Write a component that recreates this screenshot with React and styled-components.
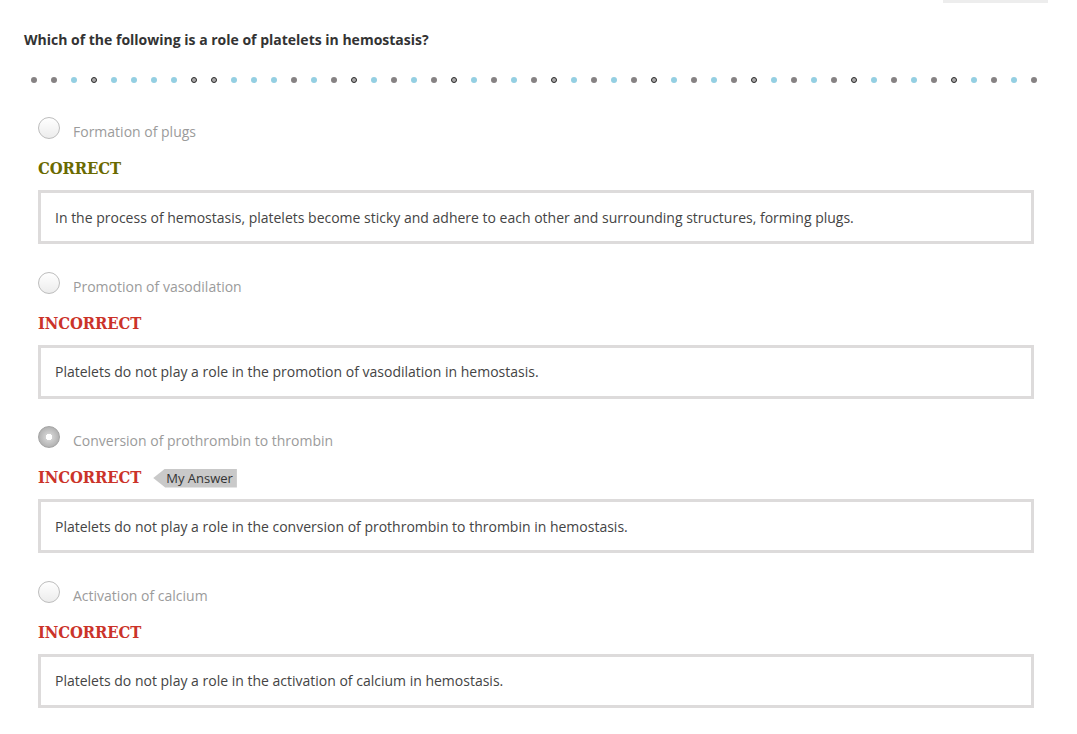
import React from 'react';
import styled, { createGlobalStyle } from 'styled-components';

const GlobalStyle = createGlobalStyle`
  body {
    margin: 0;
    background: #fff;
    font-family: 'Open Sans', 'Liberation Sans', sans-serif;
  }
`;

const question = 'Which of the following is a role of platelets in hemostasis?';

// g = grey, b = blue, r = ring
const dotPattern = 'ggbrbbbbrrbbbgbgrbgbgrbgbgrbgbgrbgbgrbgbgrbgbgrbgbg';

const answers = [
  {
    label: 'Formation of plugs',
    correct: true,
    feedback:
      'In the process of hemostasis, platelets become sticky and adhere to each other and surrounding structures, forming plugs.',
  },
  {
    label: 'Promotion of vasodilation',
    correct: false,
    feedback: 'Platelets do not play a role in the promotion of vasodilation in hemostasis.',
  },
  {
    label: 'Conversion of prothrombin to thrombin',
    correct: false,
    mine: true,
    feedback: 'Platelets do not play a role in the conversion of prothrombin to thrombin in hemostasis.',
  },
  {
    label: 'Activation of calcium',
    correct: false,
    feedback: 'Platelets do not play a role in the activation of calcium in hemostasis.',
  },
];

function App() {
  return (
    <Page>
      <GlobalStyle />
      <TopBar>
        <TabEdge />
      </TopBar>
      <Question>{question}</Question>
      <Dots>
        {dotPattern.split('').map((kind, i) => (
          <Dot key={i} $kind={kind} />
        ))}
      </Dots>
      <AnswerList>
        {answers.map((a) => (
          <Answer key={a.label}>
            <OptionRow>
              <Radio $checked={a.mine} />
              <OptionLabel>{a.label}</OptionLabel>
            </OptionRow>
            <ResultRow>
              <Verdict $correct={a.correct}>{a.correct ? 'CORRECT' : 'INCORRECT'}</Verdict>
              {a.mine && <MyAnswer>My Answer</MyAnswer>}
            </ResultRow>
            <Feedback>{a.feedback}</Feedback>
          </Answer>
        ))}
      </AnswerList>
    </Page>
  );
}

const Page = styled.div`
  width: 1077px;
  min-height: 734px;
  box-sizing: border-box;
`;

const TopBar = styled.div`
  display: flex;
  justify-content: flex-end;
  padding-right: 29px;
`;

const TabEdge = styled.div`
  width: 105px;
  height: 3px;
  background: #ededed;
`;

const Question = styled.h2`
  margin: 27px 0 0 24px;
  font-size: 14px;
  line-height: 20px;
  font-weight: 700;
  color: #333;
`;

const Dots = styled.div`
  display: flex;
  gap: 14px;
  margin: 27px 0 0 31px;
  height: 6px;
`;

const dotColors = {
  g: '#868283',
  b: '#94cfe2',
  r: '#a9a7a8',
};

const Dot = styled.span`
  flex: none;
  width: 6px;
  height: 6px;
  border-radius: 50%;
  box-sizing: border-box;
  background: ${({ $kind }) => dotColors[$kind]};
  border: ${({ $kind }) => ($kind === 'r' ? '1.5px solid #2a2a2a' : 'none')};
`;

const AnswerList = styled.div`
  display: flex;
  flex-direction: column;
  gap: 27.5px;
  padding: 0 43px 0 38px;
  margin-top: 34px;
`;

const Answer = styled.div`
  display: flex;
  flex-direction: column;
`;

const OptionRow = styled.div`
  display: flex;
  align-items: flex-start;
  gap: 13px;
  height: 22px;
`;

const Radio = styled.span`
  flex: none;
  width: 22px;
  height: 22px;
  border-radius: 50%;
  box-sizing: border-box;
  border: 1px solid ${({ $checked }) => ($checked ? '#a4a4a4' : '#bdbdbd')};
  background: ${({ $checked }) =>
    $checked
      ? 'radial-gradient(circle at 50% 50%, #fff 0 3px, #d0d0d0 3.5px, #a0a0a0 100%)'
      : 'linear-gradient(#ffffff, #ececec)'};
`;

const OptionLabel = styled.span`
  margin-top: 5px;
  font-size: 14px;
  line-height: 20px;
  color: #9b9b9b;
`;

const ResultRow = styled.div`
  display: flex;
  align-items: center;
  gap: 12px;
  margin-top: 18px;
  height: 24px;
`;

const Verdict = styled.span`
  font-family: 'DejaVu Serif Condensed', 'DejaVu Serif', 'Liberation Serif', serif;
  font-stretch: condensed;
  font-weight: 700;
  font-size: 16.5px;
  line-height: 24px;
  letter-spacing: -0.1px;
  color: ${({ $correct }) => ($correct ? '#6a6a00' : '#cb3329')};
`;

const MyAnswer = styled.span`
  display: inline-flex;
  align-items: center;
  height: 19px;
  padding: 0 4px 0 13px;
  background: #c9c9c9;
  clip-path: polygon(12px 0, 100% 0, 100% 100%, 12px 100%, 0 50%);
  font-size: 13px;
  color: #333;
`;

const Feedback = styled.div`
  margin-top: 9px;
  height: 54px;
  box-sizing: border-box;
  border: 3px solid #dddbdb;
  padding: 0 14px;
  display: flex;
  align-items: center;
  font-size: 14px;
  color: #444;
`;

export default App;
